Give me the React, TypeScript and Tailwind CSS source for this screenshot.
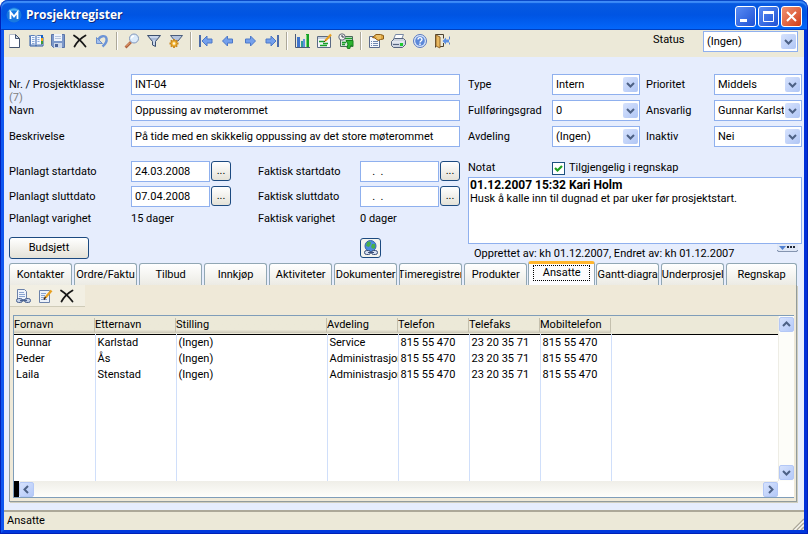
import type { ReactNode } from 'react'

type Employee = {
  first: string
  last: string
  position: string
  department: string
  phone: string
  fax: string
  mobile: string
}

const EMPLOYEES: Employee[] = [
  { first: 'Gunnar', last: 'Karlstad', position: '(Ingen)', department: 'Service', phone: '815 55 470', fax: '23 20 35 71', mobile: '815 55 470' },
  { first: 'Peder', last: 'Ås', position: '(Ingen)', department: 'Administrasjon', phone: '815 55 470', fax: '23 20 35 71', mobile: '815 55 470' },
  { first: 'Laila', last: 'Stenstad', position: '(Ingen)', department: 'Administrasjon', phone: '815 55 470', fax: '23 20 35 71', mobile: '815 55 470' },
]

const COLUMNS: { key: keyof Employee; label: string; width: string }[] = [
  { key: 'first', label: 'Fornavn', width: 'w-[81px]' },
  { key: 'last', label: 'Etternavn', width: 'w-[81px]' },
  { key: 'position', label: 'Stilling', width: 'w-[151px]' },
  { key: 'department', label: 'Avdeling', width: 'w-[71px]' },
  { key: 'phone', label: 'Telefon', width: 'w-[71px]' },
  { key: 'fax', label: 'Telefaks', width: 'w-[71px]' },
  { key: 'mobile', label: 'Mobiltelefon', width: 'w-[71px]' },
]

const TABS = [
  'Kontakter', 'Ordre/Faktu', 'Tilbud', 'Innkjøp', 'Aktiviteter', 'Dokumenter',
  'Timeregistrer', 'Produkter', 'Ansatte', 'Gantt-diagra', 'Underprosjel', 'Regnskap',
]
const ACTIVE_TAB = 'Ansatte'

/* ---------- Icons ---------- */

function Icon({ children }: { children: ReactNode }) {
  return (
    <svg width="16" height="16" viewBox="0 0 16 16" fill="none" aria-hidden="true">
      {children}
    </svg>
  )
}

const NewIcon = () => (
  <Icon>
    <path d="M3.5 1.5h6l4 4v9h-10z" fill="#fff" stroke="#b4bccc" />
    <path d="M13.5 5.500v9h-10" stroke="#44546e" />
    <path d="M9.500 1.500v4h4z" fill="#cfd9ea" stroke="#44546e" />
  </Icon>
)

const BookIcon = () => (
  <Icon>
    <path d="M1 3h1v10h13V4" stroke="#2c5aa8" />
    <path d="M2.500 2.500h4l1.500 1 1.500-1h4v9.500h-4L8 13l-1.500-1h-4z" fill="#f4f8ff" stroke="#5b7fbb" />
    <path d="M8 4v9" stroke="#2c5aa8" />
    <path d="M4 4.500h2.500M4 6.500h2.500M4 8.500h2.500M9.500 4.500h2M9.500 6.500h2M9.500 8.500h2M4 10.500h2.500" stroke="#8aa9d8" />
    <path d="M13 2h2v3h-2z" fill="#1560c8" />
    <path d="M13 5h2v3h-2z" fill="#f0a818" />
    <path d="M13 8h2v3h-2z" fill="#3b9a3b" />
  </Icon>
)

const SaveIcon = () => (
  <Icon>
    <path d="M1.500 1.500h13v13h-11l-2-2z" fill="#7c98ca" stroke="#5a74a8" />
    <path d="M4 1h8v7H4z" fill="#eef3fb" />
    <path d="M5 3.500h6M5 5.500h6" stroke="#b5c4de" />
    <path d="M4 10h8v5H4z" fill="#cdd8ea" />
    <path d="M5 11h3v3H5z" fill="#4c649a" />
  </Icon>
)

const DeleteIcon = () => (
  <Icon>
    <path d="M2 2.500C6 5 10 9 13.500 13.500M13.500 2.500C9 5 5 9 2.500 13.500" stroke="#181818" strokeWidth="1.800" strokeLinecap="round" />
  </Icon>
)

const UndoIcon = () => (
  <Icon>
    <path d="M4.500 6.500C6 2.500 11.500 2 12.500 5.500c.7 3-1 5.500-4 8" stroke="#6c94d6" strokeWidth="2.400" />
    <path d="M2.500 4.500v6h6z" fill="#a4c0ee" stroke="#6c90cc" />
  </Icon>
)

const SearchIcon = () => (
  <Icon>
    <path d="M1.500 14.500L7 9" stroke="#b0603a" strokeWidth="2.600" />
    <path d="M2 13.500L6 9.500" stroke="#f0b080" />
    <circle cx="10" cy="5.500" r="4.500" fill="#dcebfb" stroke="#8197bd" />
    <path d="M7.500 5.500c0-2 1-2.500 2.500-2.500" stroke="#fff" strokeWidth="1.500" />
  </Icon>
)

const FilterIcon = () => (
  <Icon>
    <path d="M1.500 2.500h13L9.500 8.500v5l-3-1.500V8.500z" fill="#a9bbd9" stroke="#3c506f" />
    <path d="M4 4h8" stroke="#e8f0fb" />
    <path d="M8 7v5" stroke="#e8f0fb" />
  </Icon>
)

const FilterGearIcon = () => (
  <Icon>
    <path d="M2.500 2.500h12L10 8H7z" fill="#b5c5df" stroke="#4a5d7c" />
    <g stroke="#c88418" strokeWidth="1.800">
      <path d="M6 6v9M1.500 10.500h9M2.800 7.300l6.400 6.400M9.200 7.300l-6.400 6.400" />
    </g>
    <circle cx="6" cy="10.500" r="3" fill="#f4b838" stroke="#d08c1c" />
    <circle cx="6" cy="10.500" r="1.200" fill="#fff6dc" />
  </Icon>
)

const PrevIcon = () => (
  <Icon>
    <path d="M2.500 8l5-5v3h5v4h-5v3z" fill="#74a0ec" stroke="#4c78c8" />
  </Icon>
)
const NextIcon = () => (
  <Icon>
    <path d="M13.500 8l-5-5v3h-5v4h5v3z" fill="#74a0ec" stroke="#4c78c8" />
  </Icon>
)
const FirstIcon = () => (
  <Icon>
    <path d="M2 2v12" stroke="#4c6ca8" strokeWidth="2" />
    <path d="M4 8l5-5v3h5v4H9v3z" fill="#74a0ec" stroke="#4c78c8" />
  </Icon>
)
const LastIcon = () => (
  <Icon>
    <path d="M14 2v12" stroke="#4c6ca8" strokeWidth="2" />
    <path d="M12 8L7 3v3H2v4h5v3z" fill="#74a0ec" stroke="#4c78c8" />
  </Icon>
)

const ChartIcon = () => (
  <Icon>
    <path d="M1.500 1v13.500H16" stroke="#4a5a78" />
    <path d="M3 4h3v10H3z" fill="#3f74cc" />
    <path d="M7 8h2v6H7z" fill="#2f9a9a" />
    <path d="M9 6h2v8H9z" fill="#5f90e0" />
    <path d="M12 1h3v13h-3z" fill="#18a028" />
    <path d="M12.500 2v12" stroke="#70d870" />
  </Icon>
)

const PlanIcon = () => (
  <Icon>
    <path d="M1.500 3.500h13v11h-13z" fill="#f4f6fa" stroke="#5a6a84" />
    <path d="M2 4h12v2H2z" fill="#c4cedd" />
    <path d="M3 8.500h5M7 10.500h5M4 12.500h7" stroke="#18a028" strokeWidth="1.500" />
    <path d="M15 1.500L9 8" stroke="#e8a020" strokeWidth="2.200" />
    <path d="M9.500 7.500L8 9" stroke="#503010" />
  </Icon>
)

const TimeIcon = () => (
  <Icon>
    <path d="M2.500 3.500h12v10h-12z" fill="#dce6e0" stroke="#4a6a5a" />
    <path d="M7 5.500h7M4 9.500h4M4 11.500h3" stroke="#18a028" strokeWidth="1.500" />
    <circle cx="4" cy="4" r="3.200" fill="#f4f4f4" stroke="#606878" />
    <path d="M4 2v2h2" stroke="#303848" />
    <path d="M8 7.500h7v6l-2-1.500-1.500 4L9 15l1-4z" fill="#2cb430" stroke="#14801c" />
  </Icon>
)

const PropertiesIcon = () => (
  <Icon>
    <path d="M1.500 3.500h10v11h-10z" fill="#f6f8fc" stroke="#5a6a8c" />
    <path d="M3 8.500h1M5 8.500h5M3 10.500h1M5 10.500h5M3 12.500h1M5 12.500h5" stroke="#7088b0" />
    <path d="M4.500 4.500L8 1.500h4.500l3 1v3.500l-3 .5-2 1-2-1-1.500-1.500z" fill="#e0a840" stroke="#8a5c18" />
    <path d="M8 3h5M9 5h4" stroke="#f8d890" />
  </Icon>
)

const PrintIcon = () => (
  <Icon>
    <path d="M5.500 1.500h8l-2 5h-8z" fill="#fff" stroke="#7888a4" />
    <path d="M1.500 8.500l3-3h9l2 2v4l-3 3h-9l-2-2z" fill="#cdd4e0" stroke="#56647e" />
    <path d="M2 9h12" stroke="#f8fafc" />
    <path d="M3 11.500h6" stroke="#56647e" />
    <path d="M10 10h3v3h-3z" fill="#20c830" />
  </Icon>
)

const HelpIcon = () => (
  <Icon>
    <circle cx="8" cy="8" r="6.500" fill="#dce8fa" stroke="#5878c0" />
    <circle cx="8" cy="8" r="4.800" fill="#5c88d8" />
    <path d="M6 6.500c0-2.500 4-2.500 4 0C10 8 8 8 8 9.500M8 10.500v1.500" stroke="#fff" strokeWidth="1.400" />
  </Icon>
)

const ExitIcon = () => (
  <Icon>
    <path d="M1.500 14.500v-13h8v4M9.500 10v3.500H6" stroke="#4a4030" />
    <path d="M2 2l4 2v11l-4-2z" fill="#e8b860" stroke="#94682a" />
    <path d="M15.500 3.500v3M15.500 9.500v2" stroke="#5a84cc" />
    <path d="M8.500 8L12 4.500v2h3v3h-3v2z" fill="#5c90e4" />
  </Icon>
)

const AttachIcon = () => (
  <Icon>
    <path d="M2.500 1.500h7l2 2v8h-9z" fill="#eef3fb" stroke="#6c82aa" />
    <path d="M4 4.500h5M4 6.500h6M4 8.500h6" stroke="#8aa4d0" />
    <rect x="1.500" y="10.500" width="6" height="4" rx="2" fill="#c4d2ea" stroke="#4a6290" />
    <rect x="9.500" y="10.500" width="6" height="4" rx="2" fill="#c4d2ea" stroke="#4a6290" />
    <path d="M5 12.500h7" stroke="#4a6290" strokeWidth="1.500" />
  </Icon>
)

const EditIcon = () => (
  <Icon>
    <path d="M2.500 2.500h10v12h-10z" fill="#eef3fb" stroke="#6c82aa" />
    <path d="M4 5.500h5M4 7.500h4M4 9.500h3M4 11.500h6" stroke="#8aa4d0" />
    <path d="M14.500 2.500L8.500 9.500" stroke="#e8a020" strokeWidth="2.400" />
    <path d="M8.500 9L7 11.500" stroke="#402810" strokeWidth="1.500" />
  </Icon>
)

const GlobeLinkIcon = () => (
  <Icon>
    <circle cx="7.500" cy="6" r="5.500" fill="#4c8ce0" stroke="#3868a8" />
    <path d="M4 2.500c2-2 4-1 4 1L6 7 3 6zM9 4h3v4l-2 1-2-2z" fill="#48b048" />
    <rect x="1.500" y="10.500" width="6" height="4" rx="2" fill="#d4def0" stroke="#3a4e78" />
    <rect x="8.500" y="10.500" width="6" height="4" rx="2" fill="#d4def0" stroke="#3a4e78" />
    <path d="M5 12.500h6" stroke="#3a4e78" />
  </Icon>
)

const TOOLBAR: { label: string; icon: () => ReactNode }[][] = [
  [
    { label: 'Ny', icon: NewIcon },
    { label: 'Åpne', icon: BookIcon },
    { label: 'Lagre', icon: SaveIcon },
    { label: 'Slett', icon: DeleteIcon },
    { label: 'Angre', icon: UndoIcon },
  ],
  [
    { label: 'Søk', icon: SearchIcon },
    { label: 'Filter', icon: FilterIcon },
    { label: 'Filteroppsett', icon: FilterGearIcon },
  ],
  [
    { label: 'Første', icon: FirstIcon },
    { label: 'Forrige', icon: PrevIcon },
    { label: 'Neste', icon: NextIcon },
    { label: 'Siste', icon: LastIcon },
  ],
  [
    { label: 'Graf', icon: ChartIcon },
    { label: 'Plan', icon: PlanIcon },
    { label: 'Timer', icon: TimeIcon },
  ],
  [
    { label: 'Egenskaper', icon: PropertiesIcon },
    { label: 'Skriv ut', icon: PrintIcon },
    { label: 'Hjelp', icon: HelpIcon },
    { label: 'Avslutt', icon: ExitIcon },
  ],
]

/* ---------- Controls ---------- */

function Chevron({ d }: { d: string }) {
  return (
    <svg width="9" height="9" viewBox="0 0 9 9" fill="none" aria-hidden="true">
      <path d={d} stroke="#4d6185" strokeWidth="2" />
    </svg>
  )
}

function Select({ id, value }: { id: string; value: string }) {
  return (
    <div className="relative h-[21px] min-w-0">
      <select
        id={id}
        className="block h-full w-full appearance-none overflow-hidden border border-[#8fb0ee] bg-white pr-[17px] pl-[3px] text-clip"
      >
        <option>{value}</option>
      </select>
      <span className="pointer-events-none absolute top-[3px] right-[2px] flex h-[15px] w-[15px] items-center justify-center rounded-xs bg-linear-to-br from-[#d6e2fd] to-[#b0c6f5]">
        <Chevron d="M1 3l3.500 3.500L8 3" />
      </span>
    </div>
  )
}

function TextField({ id, value }: { id: string; value: string }) {
  return (
    <input
      id={id}
      defaultValue={value}
      className="h-[21px] w-full min-w-0 border border-[#8fb0ee] bg-white px-[3px]"
    />
  )
}

function DateField({ id, value }: { id: string; value: string }) {
  return (
    <div className="flex gap-px">
      <input
        id={id}
        defaultValue={value}
        className="h-[21px] w-[79px] border border-[#8fb0ee] bg-white px-[3px] whitespace-pre"
      />
      <button
        type="button"
        aria-label="Velg dato"
        className="h-[20px] w-[20px] rounded-[3px] border border-[#1c4a80] bg-linear-to-b from-white to-[#e4e2d8] leading-4"
      >
        ...
      </button>
    </div>
  )
}

function ScrollButton({ label, d }: { label: string; d: string }) {
  return (
    <button
      type="button"
      aria-label={label}
      className="flex h-[15px] w-[15px] shrink-0 items-center justify-center rounded-xs border border-[#b4c8f6] bg-linear-to-br from-[#d6e2fd] to-[#b4c9f8]"
    >
      <Chevron d={d} />
    </button>
  )
}

/* ---------- Sections ---------- */

function TitleBar() {
  return (
    <header className="flex h-[30px] shrink-0 items-center gap-1 rounded-t-[7px] bg-linear-to-b from-[#0a5be0] via-[#0054e3] to-[#0468fc] px-[5px] shadow-[inset_0_1px_0_#0a48c8,inset_0_3px_1px_#3f8cf8,inset_0_-1px_0_#0040c0]">
      <svg width="16" height="16" viewBox="0 0 16 16" fill="none" aria-hidden="true">
        <circle cx="8" cy="8" r="7.500" fill="#1878e0" />
        <path d="M2 5a7 7 0 0 1 12 0c-4-2-8-2-12 0z" fill="#48b0f4" />
        <path d="M4.500 12V5L8 9.500 11.500 5v7" stroke="#fff" strokeWidth="1.800" />
      </svg>
      <h1 className="flex-1 font-[Open_Sans,sans-serif] text-[12px] leading-4 font-bold text-white [text-shadow:1px_1px_0_#0a2a80]">
        Prosjektregister
      </h1>
      <div className="flex gap-0.5 pt-0.5">
        <button type="button" aria-label="Minimer" className="flex h-[21px] w-[21px] items-center justify-center rounded-[3px] border border-white bg-linear-to-br from-[#5a8cf4] to-[#1f50d4]">
          <svg width="13" height="13" viewBox="0 0 13 13" aria-hidden="true">
            <path d="M1 9h7v3H1z" fill="#fff" />
          </svg>
        </button>
        <button type="button" aria-label="Maksimer" className="flex h-[21px] w-[21px] items-center justify-center rounded-[3px] border border-white bg-linear-to-br from-[#5a8cf4] to-[#1f50d4]">
          <svg width="13" height="13" viewBox="0 0 13 13" fill="none" aria-hidden="true">
            <path d="M1.500 2v9.500h10V2" stroke="#fff" />
            <path d="M1 2.500h11" stroke="#fff" strokeWidth="3" />
          </svg>
        </button>
        <button type="button" aria-label="Lukk" className="flex h-[21px] w-[21px] items-center justify-center rounded-[3px] border border-white bg-linear-to-br from-[#f09070] to-[#d03a10]">
          <svg width="13" height="13" viewBox="0 0 13 13" fill="none" aria-hidden="true">
            <path d="M2 2l9 9M11 2l-9 9" stroke="#fff" strokeWidth="2" />
          </svg>
        </button>
      </div>
    </header>
  )
}

function Toolbar() {
  return (
    <div className="flex h-[27px] shrink-0 items-start bg-[#ece9d8] pt-px pr-1.5 pl-0.5">
      <div className="flex h-[20px] flex-1 items-center gap-1.5">
        {TOOLBAR.map((group, i) => (
          <div key={group[0].label} className="flex items-center gap-1.5">
            {i > 0 && <span className="h-[18px] w-0.5 border-r border-l border-r-white border-l-[#aca899]" />}
            {group.map(({ label, icon: Glyph }) => (
              <button key={label} type="button" aria-label={label} className="h-4 w-4">
                <Glyph />
              </button>
            ))}
          </div>
        ))}
      </div>
      <label htmlFor="status" className="w-[50px] leading-[18px]">Status</label>
      <div className="w-[95px]">
        <Select id="status" value="(Ingen)" />
      </div>
    </div>
  )
}

function ProjectForm() {
  return (
    <div className="flex shrink-0 gap-2 pt-[17px] pr-0.5 pl-[5px]">
      <div className="min-w-0 flex-1">
        <div className="grid grid-cols-[122px_1fr] items-center gap-y-[5px]">
          <div className="relative">
            <label htmlFor="nr">Nr. / Prosjektklasse</label>
            <span className="absolute top-[13px] left-0 text-[#808080]">(7)</span>
          </div>
          <TextField id="nr" value="INT-04" />
          <label htmlFor="navn">Navn</label>
          <TextField id="navn" value="Oppussing av møterommet" />
          <label htmlFor="beskrivelse">Beskrivelse</label>
          <TextField id="beskrivelse" value="På tide med en skikkelig oppussing av det store møterommet" />
        </div>

        <div className="mt-3.5 grid grid-cols-[122px_127px_102px_1fr] items-center gap-y-1">
          <label htmlFor="pstart">Planlagt startdato</label>
          <DateField id="pstart" value="24.03.2008" />
          <label htmlFor="fstart">Faktisk startdato</label>
          <DateField id="fstart" value="   .  ." />
          <label htmlFor="pslutt">Planlagt sluttdato</label>
          <DateField id="pslutt" value="07.04.2008" />
          <label htmlFor="fslutt">Faktisk sluttdato</label>
          <DateField id="fslutt" value="   .  ." />
          <span className="leading-4">Planlagt varighet</span>
          <span className="leading-4">15 dager</span>
          <span className="leading-4">Faktisk varighet</span>
          <span className="leading-4">0 dager</span>
        </div>

        <div className="mt-2.5 grid grid-cols-[351px_1fr] items-center">
          <button type="button" className="h-[22px] w-[80px] rounded-[3px] border border-[#1c4a80] bg-linear-to-b from-white to-[#e4e2d8]">
            Budsjett
          </button>
          <button type="button" aria-label="Lenker" className="flex h-[20px] w-[21px] items-center justify-center rounded-[3px] border border-[#1c4a80] bg-[#f4f4ee]">
            <GlobeLinkIcon />
          </button>
        </div>
      </div>

      <div className="w-[334px]">
        <div className="grid grid-cols-[84px_88px_74px_88px] items-center gap-y-[5px]">
          <label htmlFor="type">Type</label>
          <Select id="type" value="Intern" />
          <label htmlFor="prioritet" className="pl-1.5">Prioritet</label>
          <Select id="prioritet" value="Middels" />
          <label htmlFor="grad">Fullføringsgrad</label>
          <Select id="grad" value="0" />
          <label htmlFor="ansvarlig" className="pl-1.5">Ansvarlig</label>
          <Select id="ansvarlig" value="Gunnar Karlst" />
          <label htmlFor="avdeling">Avdeling</label>
          <Select id="avdeling" value="(Ingen)" />
          <label htmlFor="inaktiv" className="pl-1.5">Inaktiv</label>
          <Select id="inaktiv" value="Nei" />
        </div>

        <div className="mt-3 grid h-[18px] grid-cols-[84px_1fr] items-center">
          <span id="notat-label">Notat</span>
          <label className="flex items-center gap-1">
            <span className="relative h-[13px] w-[13px]">
              <input type="checkbox" defaultChecked className="peer block h-full w-full appearance-none border border-[#1c5180] bg-white" />
              <svg className="pointer-events-none absolute inset-0 hidden peer-checked:block" width="13" height="13" viewBox="0 0 13 13" fill="none" aria-hidden="true">
                <path d="M3 6l2.500 2.500L10 4" stroke="#21a121" strokeWidth="2.200" />
              </svg>
            </span>
            Tilgjengelig i regnskap
          </label>
        </div>
        <div
          role="textbox"
          aria-labelledby="notat-label"
          aria-multiline="true"
          contentEditable
          suppressContentEditableWarning
          className="h-[67px] border border-[#8fb0ee] bg-white px-px leading-[14px]"
        >
          <p className="text-[12px] font-bold">01.12.2007 15:32 Kari Holm</p>
          <p>Husk å kalle inn til dugnad et par uker før prosjektstart.</p>
        </div>
        <div className="flex h-[17px] items-start justify-between pr-1 pl-1.5">
          <span className="leading-[20px]">Opprettet av: kh 01.12.2007, Endret av: kh 01.12.2007</span>
          <button type="button" aria-label="Vis mer" className="h-2 w-[21px]">
            <svg width="21" height="8" viewBox="0 0 21 8" aria-hidden="true">
              <path d="M0 0h21v7H0z" fill="#dfe7f6" />
              <path d="M0 6.500h1v1h19v-1h1" fill="none" stroke="#8494b0" />
              <path d="M2 2h7L5.500 6z" fill="#5080d0" />
              <path d="M10 2h2v2h-2zM13 2h2v2h-2zM16 2h2v2h-2z" fill="#202838" />
            </svg>
          </button>
        </div>
      </div>
    </div>
  )
}

function Tabs() {
  return (
    <div role="tablist" className="flex h-[24px] shrink-0 items-end gap-0.5">
      {TABS.map((tab) =>
        tab === ACTIVE_TAB ? (
          <button
            key={tab}
            type="button"
            role="tab"
            aria-selected="true"
            className="-mx-px h-[24px] min-w-0 flex-[67] rounded-t-[3px] border-x border-t-[3px] border-x-[#91a7b4] border-t-[#ffb52e] bg-[#fcfcfe] pb-1"
          >
            <span className="mx-1 block border border-dotted border-black leading-[14px]">{tab}</span>
          </button>
        ) : (
          <button
            key={tab}
            type="button"
            role="tab"
            aria-selected="false"
            className="flex h-[22px] min-w-0 flex-[63] justify-center overflow-hidden rounded-t-[3px] border border-b-0 border-[#91a7b4] bg-linear-to-b from-white to-[#ecebe4] leading-[22px] whitespace-nowrap last:flex-[71]"
          >
            {tab}
          </button>
        ),
      )}
    </div>
  )
}

function EmployeeTable() {
  return (
    <div className="ml-[3px] mr-0.5 flex min-h-0 flex-1 flex-col border-y border-l border-[#7f9db9] bg-white">
      <div className="flex min-h-0 flex-1">
        <div className="min-w-0 flex-1">
          <table className="h-full w-full table-fixed border-collapse text-left">
            <colgroup>
              {COLUMNS.map((col) => <col key={col.key} className={col.width} />)}
              <col />
            </colgroup>
            <thead>
              <tr className="border-b border-black bg-linear-to-b from-[#ece9d8] from-80% to-[#cbc7b8]">
                {COLUMNS.map((col) => (
                  <th key={col.key} className="h-[18px] p-0 font-normal">
                    <span className="block overflow-hidden border-r border-[#c4c0ae] leading-[14px] whitespace-nowrap">
                      {col.label}
                    </span>
                  </th>
                ))}
                <th className="bg-[#ece9d8] p-0" aria-label="Tom" />
              </tr>
            </thead>
            <tbody>
              {EMPLOYEES.map((row) => (
                <tr key={row.first} className="h-4">
                  {COLUMNS.map((col) => (
                    <td key={col.key} className="h-4 overflow-hidden border-r border-[#d0dffa] p-0 pl-0.5 leading-4 whitespace-nowrap">
                      {row[col.key]}
                    </td>
                  ))}
                  <td />
                </tr>
              ))}
              <tr>
                {COLUMNS.map((col) => <td key={col.key} className="border-r border-[#d0dffa]" />)}
                <td />
              </tr>
            </tbody>
          </table>
        </div>
        <div className="flex w-4 flex-col items-center justify-between border-l border-[#eeede5] bg-[#fdfdf9] py-px">
          <ScrollButton label="Rull opp" d="M1 6l3.500-3.500L8 6" />
          <ScrollButton label="Rull ned" d="M1 3l3.500 3.500L8 3" />
        </div>
      </div>
      <div className="flex h-[16px] shrink-0">
        <span className="w-[5px] bg-black" />
        <div className="flex flex-1 items-center justify-between bg-linear-to-b from-[#efeee8] to-[#fefefb]">
          <ScrollButton label="Rull til venstre" d="M6 1L2.500 4.500 6 8" />
          <ScrollButton label="Rull til høyre" d="M3 1l3.500 3.500L3 8" />
        </div>
        <span className="w-4 bg-white" />
      </div>
    </div>
  )
}

export default function App() {
  return (
    <div className="h-screen bg-white">
      <div className="flex h-full flex-col rounded-t-[8px] border-x border-b border-[#0020b8] bg-[#0831d9] font-[Roboto,sans-serif] text-[11px] leading-[14px] text-black">
        <TitleBar />
        <main className="flex min-h-0 flex-1 flex-col border-x-3 border-b-3 border-r-[#0030d8] border-b-[#0038dc] border-l-[#0f56f0] bg-[#e6edfd]">
          <Toolbar />
          <ProjectForm />
          <div className="mr-[7px] mb-2 ml-[5px] flex min-h-0 flex-1 flex-col">
            <Tabs />
            <div role="tabpanel" aria-label={ACTIVE_TAB} className="flex min-h-0 flex-1 flex-col border border-t-0 border-[#919b9c] bg-[#efe9d8] pb-[3px] shadow-[1px_1px_0_#d0cebf]">
              <div className="mb-2 flex h-[22px] w-[75px] items-center gap-1.5 border-b border-[#cfcbb8] bg-[#f2efe3] pl-[5px]">
                <button type="button" aria-label="Legg til" className="h-4 w-4"><AttachIcon /></button>
                <button type="button" aria-label="Rediger" className="h-4 w-4"><EditIcon /></button>
                <button type="button" aria-label="Fjern" className="h-4 w-4"><DeleteIcon /></button>
              </div>
              <EmployeeTable />
            </div>
          </div>
          <footer className="flex h-[20px] shrink-0 items-end justify-between border-t-2 border-t-[#aca899] bg-[#ece9d8] pl-[3px]">
            <span className="leading-[18px]">{ACTIVE_TAB}</span>
            <svg width="12" height="12" viewBox="0 0 12 12" fill="none" aria-hidden="true">
              <path d="M1 12L12 1M5 12l7-7M9 12l3-3" stroke="#aca899" strokeWidth="1.500" />
              <path d="M2.500 12L12 2.500M6.500 12L12 6.500" stroke="#fff" />
            </svg>
          </footer>
        </main>
      </div>
    </div>
  )
}
